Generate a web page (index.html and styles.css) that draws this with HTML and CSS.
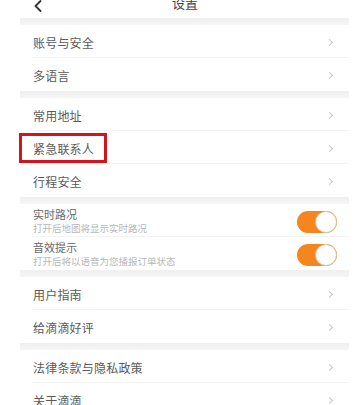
FILE: index.html
```html
<!DOCTYPE html>
<html lang="zh-CN">
<head>
<meta charset="utf-8">
<title>设置</title>
<link rel="stylesheet" href="styles.css">
</head>
<body>
<div class="panel">
  <header class="header">
    <svg class="back" width="10" height="12" viewBox="0 0 10 12"><path d="M7.5 1 L2.5 6 L7.5 11" fill="none" stroke="#333" stroke-width="1.8" stroke-linecap="round" stroke-linejoin="round"/></svg>
    <div class="title">设置</div>
  </header>

  <div class="band"></div>
  <div class="row"><span class="label">账号与安全</span><span class="chev"></span></div>
  <div class="row last"><span class="label">多语言</span><span class="chev"></span></div>

  <div class="band"></div>
  <div class="row"><span class="label">常用地址</span><span class="chev"></span></div>
  <div class="row mark"><span class="label">紧急联系人</span><span class="chev"></span><span class="redbox"></span></div>
  <div class="row last"><span class="label">行程安全</span><span class="chev"></span></div>

  <div class="band"></div>
  <div class="row toggle-row">
    <div class="texts"><div class="ttl">实时路况</div><div class="sub">打开后地图将显示实时路况</div></div>
    <span class="switch"><span class="knob"></span></span>
  </div>
  <div class="row toggle-row last">
    <div class="texts"><div class="ttl">音效提示</div><div class="sub">打开后将以语音为您播报订单状态</div></div>
    <span class="switch"><span class="knob"></span></span>
  </div>

  <div class="band"></div>
  <div class="row"><span class="label">用户指南</span><span class="chev"></span></div>
  <div class="row last"><span class="label">给滴滴好评</span><span class="chev"></span></div>

  <div class="band"></div>
  <div class="row"><span class="label">法律条款与隐私政策</span><span class="chev"></span></div>
  <div class="row last"><span class="label">关于滴滴</span><span class="chev"></span></div>
</div>
</body>
</html>
```

FILE: styles.css
```css
html, body {
  margin: 0;
  padding: 0;
  background: #ffffff;
  overflow: hidden;
}
body {
  font-family: "Noto Sans CJK SC", "Noto Sans", sans-serif;
  color: #4a4a4a;
}
.panel {
  margin-left: 20px;
  width: 329px;
  background: #ffffff;
}
.header {
  position: relative;
  height: 18px;
  overflow: hidden;
}
.back {
  position: absolute;
  left: 13px;
  top: 0px;
}
.title {
  text-align: center;
  font-size: 13px;
  line-height: 14px;
  margin-top: -4px;
  color: #444;
  padding-left: 1px;
}
.band {
  height: 7px;
  background: linear-gradient(#efefef, #f6f6f6);
}
.row {
  position: relative;
  height: 33px;
  display: flex;
  align-items: center;
  justify-content: space-between;
  padding: 0 15px 0 13px;
  box-sizing: border-box;
}
.row::after {
  content: "";
  position: absolute;
  left: 13px;
  right: 0;
  bottom: 0;
  height: 1px;
  background: #f3f3f3;
}
.row.last::after { display: none; }
.label {
  font-size: 12px;
  line-height: 16px;
  color: #5a5a5a;
  letter-spacing: 0.2px;
  padding-top: 2px;
}
.chev {
  width: 4px;
  height: 4px;
  border-top: 1px solid #c8c8c8;
  border-right: 1px solid #c8c8c8;
  transform: rotate(45deg);
  margin-right: 2px;
  margin-top: 2px;
}
.redbox {
  position: absolute;
  left: -1px;
  top: 2px;
  width: 88px;
  height: 30px;
  box-sizing: border-box;
  border: 3px solid #d3141c;
}
.toggle-row {
  padding-right: 12px;
}
.texts {
  display: flex;
  flex-direction: column;
}
.ttl {
  font-size: 11px;
  line-height: 15px;
  color: #666;
}
.sub {
  font-size: 9.5px;
  line-height: 12px;
  color: #b8b8b8;
}
.switch {
  position: relative;
  width: 40px;
  height: 22px;
  border-radius: 11px;
  background: #f5851f;
  margin-top: 2px;
}
.knob {
  position: absolute;
  right: 0;
  top: 0;
  width: 22px;
  height: 22px;
  box-sizing: border-box;
  border-radius: 50%;
  background: #ffffff;
  border: 1px solid #d9c6a8;
}
```
